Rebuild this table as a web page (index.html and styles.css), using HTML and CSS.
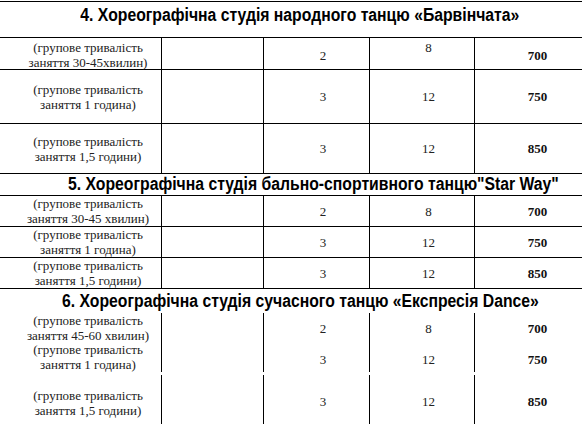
FILE: index.html
```html
<!DOCTYPE html>
<html lang="uk">
<head>
<meta charset="utf-8">
<title>Хореографічні студії</title>
<link rel="stylesheet" href="styles.css">
</head>
<body>
<div class="sheet">
  <div class="title t4"><span class="narrow">4. Хореографічна студія народного танцю «Барвінчата»</span></div>
  <div class="row ra">
    <div class="cell desc">(групове тривалість<br>заняття 30-45хвилин)</div>
    <div class="cell"></div>
    <div class="cell num low">2</div>
    <div class="cell num high">8</div>
    <div class="cell price low">700</div>
  </div>
  <div class="row rb">
    <div class="cell desc">(групове тривалість<br>заняття 1 година)</div>
    <div class="cell"></div>
    <div class="cell num">3</div>
    <div class="cell num">12</div>
    <div class="cell price">750</div>
  </div>
  <div class="row rc">
    <div class="cell desc">(групове тривалість<br>заняття 1,5 години)</div>
    <div class="cell"></div>
    <div class="cell num">3</div>
    <div class="cell num">12</div>
    <div class="cell price">850</div>
  </div>

  <div class="title t5"><span class="narrow">5. Хореографічна студія бально-спортивного танцю"Star Way"</span></div>
  <div class="row rs">
    <div class="cell desc">(групове тривалість<br>заняття 30-45 хвилин)</div>
    <div class="cell"></div>
    <div class="cell num">2</div>
    <div class="cell num">8</div>
    <div class="cell price">700</div>
  </div>
  <div class="row rs">
    <div class="cell desc">(групове тривалість<br>заняття 1 година)</div>
    <div class="cell"></div>
    <div class="cell num">3</div>
    <div class="cell num">12</div>
    <div class="cell price">750</div>
  </div>
  <div class="row rs">
    <div class="cell desc">(групове тривалість<br>заняття 1,5 години)</div>
    <div class="cell"></div>
    <div class="cell num">3</div>
    <div class="cell num">12</div>
    <div class="cell price">850</div>
  </div>

  <div class="title t6"><span class="narrow">6. Хореографічна студія сучасного танцю «Експресія Dance»</span></div>
  <div class="row open rd">
    <div class="cell desc">(групове тривалість<br>заняття 45-60 хвилин)</div>
    <div class="cell"></div>
    <div class="cell num">2</div>
    <div class="cell num">8</div>
    <div class="cell price">700</div>
  </div>
  <div class="row open re">
    <div class="cell desc">(групове тривалість<br>заняття 1 година)</div>
    <div class="cell"></div>
    <div class="cell num">3</div>
    <div class="cell num">12</div>
    <div class="cell price">750</div>
  </div>
  <div class="gap"></div>
  <div class="row open rf">
    <div class="cell desc">(групове тривалість<br>заняття 1,5 години)</div>
    <div class="cell"></div>
    <div class="cell num">3</div>
    <div class="cell num">12</div>
    <div class="cell price">850</div>
  </div>
</div>
</body>
</html>
```
FILE: styles.css
```css
html, body {
  margin: 0;
  padding: 0;
  background: #fff;
  overflow: hidden;
}

.sheet {
  width: 600px;
  margin-top: 1px;
  border-top: 1px solid #000;
  font-family: "Liberation Serif", "Times New Roman", serif;
  font-size: 13px;
  line-height: 15px;
  color: #222;
}

.title {
  font-family: "Liberation Sans", Arial, sans-serif;
  font-weight: bold;
  font-size: 18px;
  line-height: 20px;
  color: #000;
  display: flex;
  justify-content: center;
  align-items: flex-start;
  box-sizing: border-box;
  white-space: nowrap;
}

.narrow {
  display: inline-block;
  transform: scaleX(0.875);
  transform-origin: center;
}

.t4 {
  height: 36px;
  padding-top: 3px;
  border-bottom: 1px solid #000;
}

.t5 {
  height: 22px;
  padding-left: 27px;
  border-bottom: 1px solid #000;
}

.t6 {
  height: 24px;
  padding-top: 2px;
}

.row {
  display: grid;
  grid-template-columns: 161px 102px 106px 105px 126px;
  box-sizing: border-box;
  border-bottom: 1px solid #000;
}

.row.open {
  border-bottom: none;
}

.cell {
  display: flex;
  flex-direction: column;
  justify-content: center;
  text-align: center;
  box-sizing: border-box;
}

.cell + .cell {
  border-left: 1px solid #000;
}

.desc {
  padding-left: 15px;
  white-space: nowrap;
}

.num {
  padding-left: 13px;
}

.price {
  font-weight: bold;
  color: #111;
}

.ra { height: 32px; }
.rb { height: 54px; }
.rc { height: 50px; }
.rs { height: 31px; }

.ra .desc { justify-content: flex-start; padding-top: 2px; }
.ra .low { justify-content: flex-start; padding-top: 10px; }
.ra .high { justify-content: flex-start; padding-top: 2px; }

.rd { height: 29px; }
.re { height: 29px; }
.re .cell { justify-content: flex-end; }
.re .num, .re .price { padding-bottom: 5px; }
.gap { height: 4px; }
.rf { height: 60px; }
.rf .cell { justify-content: flex-start; padding-top: 13px; }
.rf .num, .rf .price { padding-top: 19px; }
```
